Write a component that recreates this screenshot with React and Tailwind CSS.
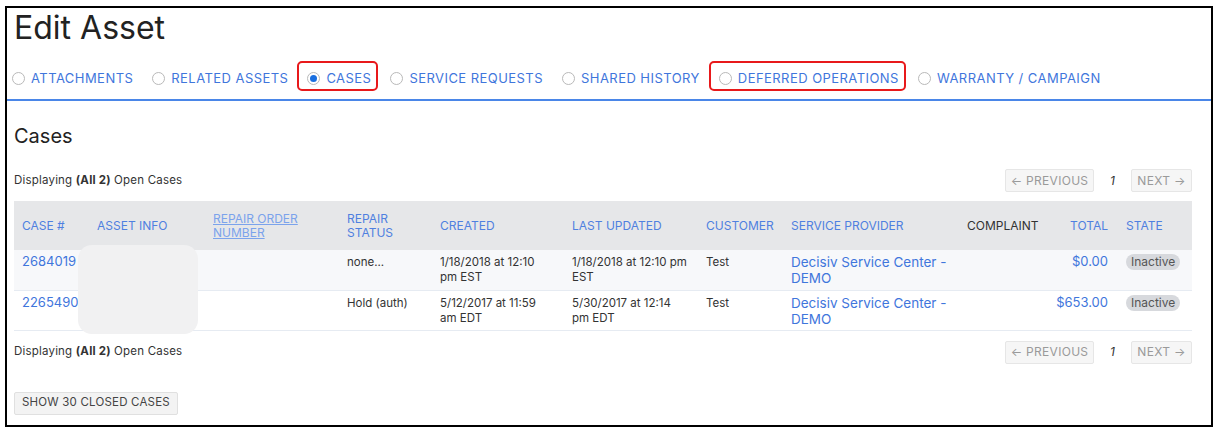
import React from 'react';

const tabs = [
  { label: 'ATTACHMENTS' },
  { label: 'RELATED ASSETS' },
  { label: 'CASES', checked: true, marked: true },
  { label: 'SERVICE REQUESTS' },
  { label: 'SHARED HISTORY' },
  { label: 'DEFERRED OPERATIONS', marked: true },
  { label: 'WARRANTY / CAMPAIGN' },
];

const rows = [
  {
    id: '2684019',
    status: 'none...',
    created: ['1/18/2018 at 12:10', 'pm EST'],
    updated: ['1/18/2018 at 12:10 pm', 'EST'],
    customer: 'Test',
    total: '$0.00',
  },
  {
    id: '2265490',
    status: 'Hold (auth)',
    created: ['5/12/2017 at 11:59', 'am EDT'],
    updated: ['5/30/2017 at 12:14', 'pm EDT'],
    customer: 'Test',
    total: '$653.00',
  },
];

function Radio({ checked }) {
  return (
    <span className="w-[13px] h-[13px] rounded-full border border-[#b9b9b9] bg-white flex items-center justify-center shrink-0">
      {checked && <span className="w-[7px] h-[7px] rounded-full bg-[#1a6fe0]" />}
    </span>
  );
}

function Pager() {
  return (
    <div className="flex items-center text-[12px] tracking-[0.3px] text-[#9a9a9a]">
      <span className="h-[23px] w-[89px] justify-center flex items-center border border-[#e6e6e6] bg-[#f6f6f6] rounded-[2px]">
        ← PREVIOUS
      </span>
      <span className="w-[37px] text-center italic text-[#333]">1</span>
      <span className="h-[23px] w-[61px] justify-center flex items-center border border-[#e6e6e6] bg-[#f6f6f6] rounded-[2px]">
        NEXT →
      </span>
    </div>
  );
}

function Displaying() {
  return (
    <span className="text-[11.5px] tracking-[0.2px] text-[#333]">
      Displaying <b className="font-bold">(All 2)</b> Open Cases
    </span>
  );
}

export default function App() {
  return (
    <div
      className="w-[1217px] h-[431px] bg-white pl-[5px] pt-[6px]"
      style={{ fontFamily: 'Inter, "Open Sans", sans-serif' }}
    >
      <div className="w-[1208px] h-[421px] border-2 border-black flex flex-col">
        {/* Title */}
        <h1 className="pl-[7px] pt-[1px] text-[32px] leading-[38px] text-[#222] font-normal">Edit Asset</h1>

        {/* Tabs */}
        <div className="mt-[16px] flex items-center h-[30px] pl-[5px] gap-[19px] border-b-2 border-[#4a86e8] pb-[6px] box-content">
          {tabs.map((t) => (
            <div
              key={t.label}
              className="relative flex items-center gap-[6px] h-[16px] leading-[16px] text-[13px] tracking-[0.45px] text-[#3f76dc]"
            >
              <Radio checked={t.checked} />
              <span>{t.label}</span>
              {t.marked && (
                <span className="absolute -left-[10px] -right-[7px] -top-[9px] -bottom-[5px] border-2 border-[#e8191b] rounded-[5px]" />
              )}
            </div>
          ))}
        </div>

        {/* Cases */}
        <div className="pl-[7px] pr-[19px]">
          <h2 className="mt-[23px] text-[20px] leading-[24px] text-[#222] font-normal">Cases</h2>

          <div className="mt-[21px] flex items-center justify-between">
            <Displaying />
            <Pager />
          </div>

          <div className="relative mt-[9px]">
            <table className="w-full table-fixed text-[12px] text-[#333] border-collapse">
              <colgroup>
                <col className="w-[75px]" />
                <col className="w-[116px]" />
                <col className="w-[134px]" />
                <col className="w-[93px]" />
                <col className="w-[132px]" />
                <col className="w-[134px]" />
                <col className="w-[85px]" />
                <col className="w-[176px]" />
                <col className="w-[89px]" />
                <col className="w-[70px]" />
                <col className="w-[74px]" />
              </colgroup>
              <thead>
                <tr className="bg-[#e6e7e9] h-[49px] text-left text-[#4f80e0] font-normal">
                  <th className="font-normal px-[8px]">CASE #</th>
                  <th className="font-normal px-[8px]">ASSET INFO</th>
                  <th className="font-normal px-[8px] text-[#7ba3ec] underline leading-[14px]">
                    REPAIR ORDER
                    <br />
                    NUMBER
                  </th>
                  <th className="font-normal px-[8px] leading-[14px]">
                    REPAIR
                    <br />
                    STATUS
                  </th>
                  <th className="font-normal px-[8px]">CREATED</th>
                  <th className="font-normal px-[8px]">LAST UPDATED</th>
                  <th className="font-normal px-[8px]">CUSTOMER</th>
                  <th className="font-normal px-[8px]">SERVICE PROVIDER</th>
                  <th className="font-normal px-[8px] text-[#333]">COMPLAINT</th>
                  <th className="font-normal pr-[10px] text-right">TOTAL</th>
                  <th className="font-normal px-[8px]">STATE</th>
                </tr>
              </thead>
              <tbody>
                {rows.map((r, i) => (
                  <tr
                    key={r.id}
                    className={`${i === 0 ? 'bg-[#f7f8fa]' : 'bg-white'} border-b border-[#e6ebf2] align-top h-[40px] leading-[15px] text-[11.5px]`}
                  >
                    <td className="px-[8px] pt-[4px] text-[13px] text-[#3f76dc]">{r.id}</td>
                    <td className="px-[8px] pt-[5px]"></td>
                    <td className="px-[8px] pt-[5px]"></td>
                    <td className="px-[8px] pt-[5px]">{r.status}</td>
                    <td className="px-[8px] pt-[5px]">
                      {r.created[0]}
                      <br />
                      {r.created[1]}
                    </td>
                    <td className="px-[8px] pt-[5px]">
                      {r.updated[0]}
                      <br />
                      {r.updated[1]}
                    </td>
                    <td className="px-[8px] pt-[5px]">{r.customer}</td>
                    <td className="px-[8px] pt-[4px] text-[13.5px] text-[#3f76dc] leading-[16px]">
                      Decisiv Service Center -
                      <br />
                      DEMO
                    </td>
                    <td className="px-[8px] pt-[5px]"></td>
                    <td className="pr-[10px] pt-[4px] text-right text-[13px] text-[#3f76dc]">{r.total}</td>
                    <td className="px-[8px] pt-[4px]">
                      <span className="inline-block px-[5px] rounded-full bg-[#d7d9dd] text-[#555] text-[12px] leading-[16px]">
                        Inactive
                      </span>
                    </td>
                  </tr>
                ))}
              </tbody>
            </table>
            {/* redacted asset info */}
            <div className="absolute left-[64px] top-[44px] w-[120px] h-[89px] rounded-[14px] bg-[#f1f1f2]" />
          </div>

          <div className="mt-[10px] flex items-center justify-between">
            <Displaying />
            <Pager />
          </div>

          <button className="mt-[28px] h-[23px] px-[7px] text-[11.5px] tracking-[0.2px] text-[#444] bg-[#f3f3f3] border border-[#e0e0e0] rounded-[2px]">
            SHOW 30 CLOSED CASES
          </button>
        </div>
      </div>
    </div>
  );
}
